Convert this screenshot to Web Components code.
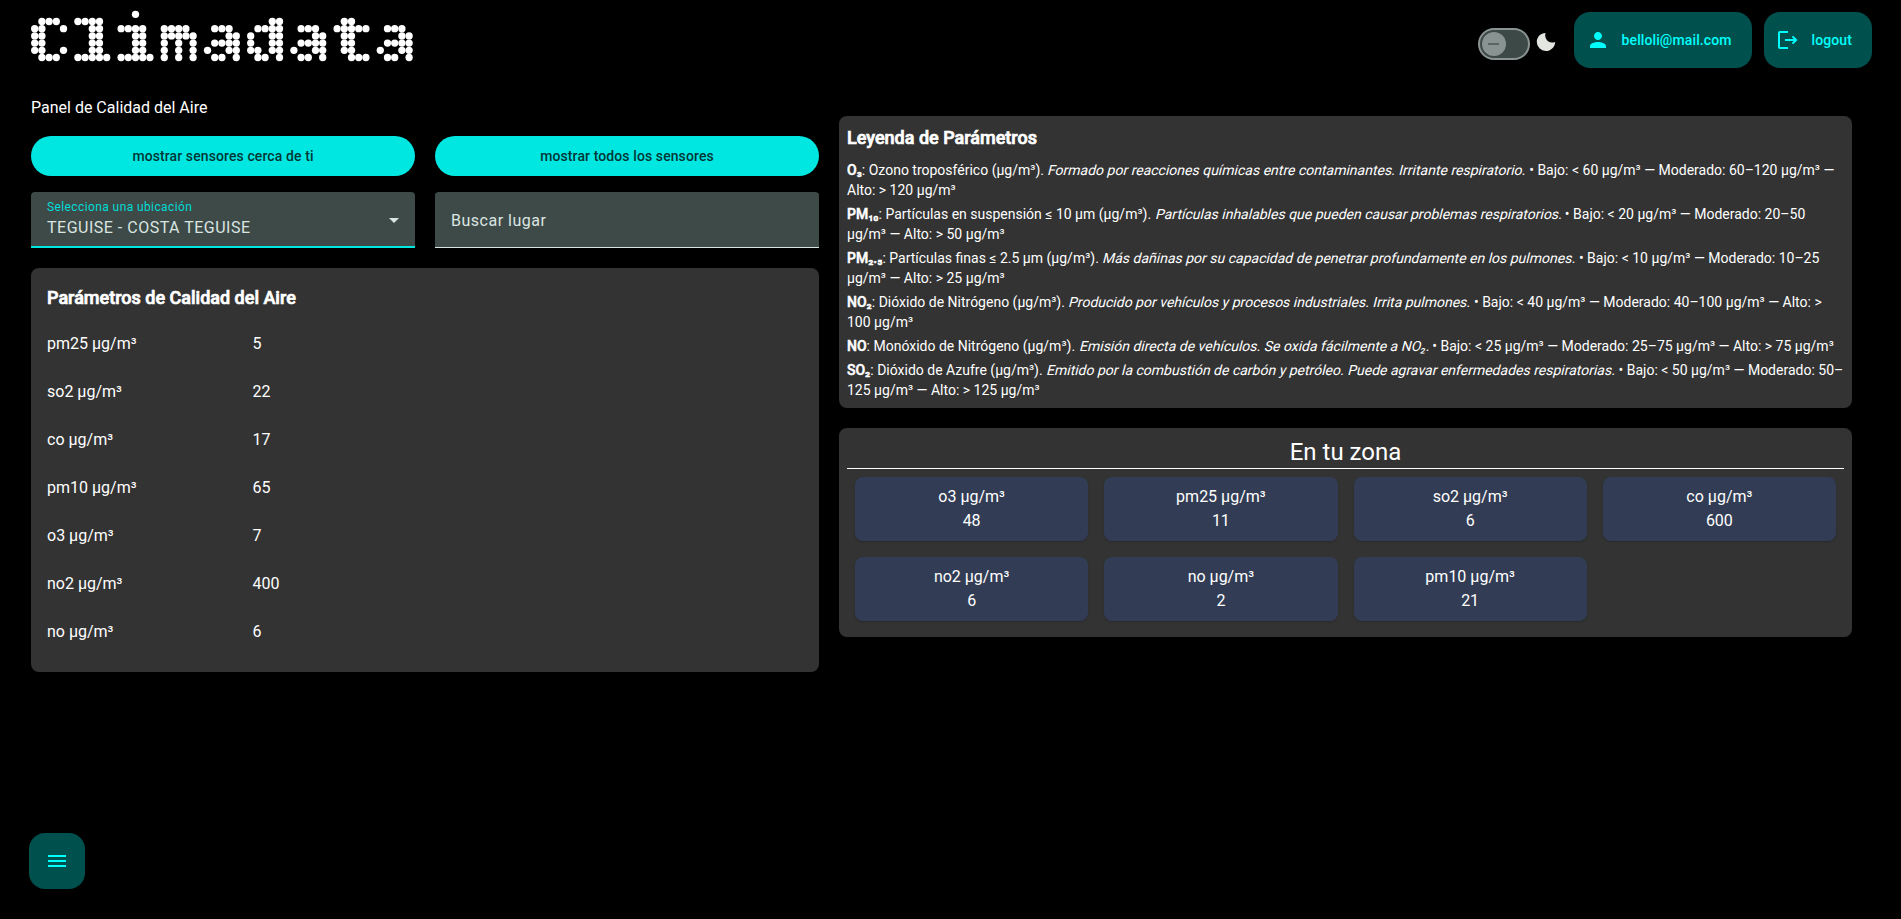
<!DOCTYPE html>
<html lang="es">
<head>
<meta charset="utf-8">
<title>Climadata</title>
<style>
html,body{margin:0;background:#000;height:100%;overflow:hidden}
body{font-family:Roboto,"Liberation Sans",sans-serif;font-size:16px;line-height:24px;color:#fff}
</style>
</head>
<body>
<clima-app></clima-app>
<script>
const define = (name, html, setup) => customElements.define(name, class extends HTMLElement {
  constructor() {
    super();
    this.attachShadow({ mode: 'open' }).innerHTML = html;
  }
  connectedCallback() { if (setup) setup.call(this, this.shadowRoot); }
});

/* Dot-matrix wordmark: seven rows of five dots per character */
const MATRIX = {
  C: '..... .###. ##..# ##... ##... ##..# .###.',
  l: '..... ####. ..##. ..##. ..##. ..##. #####',
  i: '..#.. ..... ####. ..##. ..##. ..##. #####',
  m: '..... ..... ####. ##### #.#.# #.#.# #.#.#',
  a: '..... ..... .###. ...## .#### #..## .##.#',
  d: '..... ...## .#### #..## #..## ##.## .##.#',
  t: '..... .##.. ##### .##.. .##.. .##.. ..###'
};
define('dot-logo', `<style>:host{display:block;width:384px;height:52px}svg{display:block}</style>
<svg width="390" height="52" viewBox="0 0 390 52" fill="#fff" role="img"></svg>`, function (root) {
  const word = this.getAttribute('word');
  const svg = root.querySelector('svg');
  svg.setAttribute('aria-label', word);
  let dots = '';
  [...word].forEach((ch, n) => MATRIX[ch].split(' ').forEach((row, r) => [...row].forEach((on, c) => {
    if (on === '#') dots += `<circle cx="${(3.7 + (n * 6 + c) * 7.2).toFixed(2)}" cy="${(4.3 + r * 7.2).toFixed(2)}" r="3.65"/>`;
  })));
  svg.innerHTML = dots;
});

define('theme-toggle', `<style>
:host{display:flex;align-items:center;gap:6px}
.track{box-sizing:border-box;width:52px;height:32px;border:2px solid #899391;border-radius:16px;background:#3d4947;padding:2px}
.knob{width:24px;height:24px;border-radius:50%;background:#899391;display:grid;place-items:center}
.knob i{width:11px;height:2px;background:#5b6664}
svg{display:block;margin-top:-4px}
</style><div class="track"><div class="knob"><i></i></div></div>
<svg width="20" height="20" viewBox="0 0 20 20" fill="#e3e5e1"><path d="M9.6 1.1C7.9 5.5 11.6 12.6 19.2 9.9C18.9 15.2 14.7 19 9.8 19A9 9 0 0 1 .8 10C.8 5.100 4.700 1.100 9.600 1.100Z"/></svg>`);

const ICONS = {
  person: 'M12 12c2.210 0 4-1.790 4-4s-1.790-4-4-4-4 1.790-4 4 1.790 4 4 4zm0 2c-2.670 0-8 1.340-8 4v2h16v-2c0-2.660-5.330-4-8-4z',
  logout: 'M4 5h8V3H4c-1.100 0-2 .9-2 2v14c0 1.100.9 2 2 2h8v-2H4V5zm17.500 7-4.300-4.300-1.400 1.400L17.700 11H9v2h8.700l-1.900 1.900 1.400 1.400z',
  menu: 'M3 18h18v-2H3v2zm0-5h18v-2H3v2zm0-7v2h18V6H3z'
};
define('fab-button', `<style>
:host{box-sizing:border-box;display:flex;align-items:center;gap:12px;height:56px;padding:0 20px 0 12px;border-radius:16px;background:#00504e;color:#00fffa;font-size:14px;font-weight:500;line-height:20px;white-space:nowrap;letter-spacing:.1px}
:host([square]){width:56px;padding:0 16px;gap:0}
svg{display:block;flex:none}
</style><svg width="24" height="24" viewBox="0 0 24 24" fill="currentColor"><path/></svg><slot></slot>`, function (root) {
  root.querySelector('path').setAttribute('d', ICONS[this.getAttribute('icon')]);
});

define('pill-button', `<style>
:host{display:flex;align-items:center;justify-content:center;height:40px;border-radius:20px;background:#00e7e2;color:#003736;font-size:14px;font-weight:500;letter-spacing:.1px}
</style><slot></slot>`);

define('filled-field', `<style>
:host{box-sizing:border-box;display:flex;align-items:center;height:56px;padding:2px 9px 0 16px;border-radius:4px 4px 0 0;background:#3e4a47;color:#dae5e2;letter-spacing:.5px;box-shadow:inset 0 -1px #dae5e2}
:host([active]){padding-top:0;box-shadow:inset 0 -2px #00e7e2}
.body{flex:1}
.label{display:block;font-size:12px;line-height:16px;letter-spacing:.4px;color:#00dcd7;margin:-1px 0 1px}
svg{display:none}
:host([active]) svg{display:block}
</style><div class="body"><span class="label"></span><slot></slot></div>
<svg width="24" height="24" viewBox="0 0 24 24" fill="#dae5e2"><path d="M7 10l5 5 5-5z"/></svg>`, function (root) {
  const label = root.querySelector('.label');
  if (this.hasAttribute('label')) label.textContent = this.getAttribute('label'); else label.remove();
});

define('dark-card', `<style>
:host{box-sizing:border-box;display:block;border-radius:8px;background:#333;padding:var(--pad,8px)}
</style><slot></slot>`);

define('card-title', `<style>
:host{display:block;font-size:18px;line-height:28px;font-weight:500;-webkit-text-stroke:.7px currentColor;margin-bottom:8px}
</style><slot></slot>`);

define('param-row', `<style>
:host{display:grid;grid-template-columns:205.5px 1fr;align-items:center;height:48px}
</style><slot></slot><slot name="value"></slot>`);

define('legend-item', `<style>
:host{display:block;font-size:14px;line-height:20px}
:host(:not(:last-of-type)){margin-bottom:4px}
</style><slot></slot>`);

define('zone-tile', `<style>
:host{display:flex;flex-direction:column;align-items:center;padding:8px;border-radius:8px;background:#323d55;box-shadow:0 1px 2px rgba(0,0,0,.2)}
</style><slot></slot><slot name="value"></slot>`);

define('clima-app', `<style>
:host{display:block;height:919px}
legend-item b{font-weight:500;-webkit-text-stroke:.5px currentColor}
legend-item em{display:inline-block;font-style:normal;transform:skewX(-14deg);transform-origin:0 15px}
header{display:flex;align-items:flex-start;justify-content:space-between;padding:0 29px 0 31px;height:88px}
dot-logo{margin-top:10px}
.actions{display:flex;gap:12px;padding-top:12px}
theme-toggle{margin:12px 6px 0 0;height:40px}
main{display:grid;grid-template-columns:788px 1013px;gap:20px;padding:0 49px 0 31px;align-items:start}
.intro{margin:8px 0 16px}
.pair{display:grid;grid-template-columns:1fr 1fr;gap:16px 20px;margin-bottom:20px}
.readings{--pad:16px}
.right{display:grid;gap:20px;padding-top:28px}
h2{margin:0;font-size:24px;line-height:32px;font-weight:400;text-align:center;border-bottom:1px solid #fff}
.tiles{display:grid;grid-template-columns:repeat(4,1fr);gap:16px;padding:8px}
.menu{position:fixed;left:29px;bottom:30px}
</style>
<header>
  <dot-logo word="Climadata"></dot-logo>
  <div class="actions">
    <theme-toggle></theme-toggle>
    <fab-button icon="person">belloli@mail.com</fab-button>
    <fab-button icon="logout">logout</fab-button>
  </div>
</header>
<main>
  <section class="left">
    <div class="intro">Panel de Calidad del Aire</div>
    <div class="pair">
      <pill-button>mostrar sensores cerca de ti</pill-button>
      <pill-button>mostrar todos los sensores</pill-button>
      <filled-field active label="Selecciona una ubicación">TEGUISE - COSTA TEGUISE</filled-field>
      <filled-field>Buscar lugar</filled-field>
    </div>
    <dark-card class="readings">
      <card-title>Parámetros de Calidad del Aire</card-title>
      <param-row><span>pm25 µg/m³</span><span slot="value">5</span></param-row>
      <param-row><span>so2 µg/m³</span><span slot="value">22</span></param-row>
      <param-row><span>co µg/m³</span><span slot="value">17</span></param-row>
      <param-row><span>pm10 µg/m³</span><span slot="value">65</span></param-row>
      <param-row><span>o3 µg/m³</span><span slot="value">7</span></param-row>
      <param-row><span>no2 µg/m³</span><span slot="value">400</span></param-row>
      <param-row><span>no µg/m³</span><span slot="value">6</span></param-row>
    </dark-card>
  </section>
  <section class="right">
    <dark-card>
      <card-title>Leyenda de Parámetros</card-title>
      <legend-item><b>O₃</b>: Ozono troposférico (µg/m³). <em>Formado por reacciones químicas entre contaminantes. Irritante respiratorio.</em> • Bajo: &lt; 60 µg/m³ — Moderado: 60–120 µg/m³ — Alto: &gt; 120 µg/m³</legend-item>
      <legend-item><b>PM₁₀</b>: Partículas en suspensión ≤ 10 µm (µg/m³). <em>Partículas inhalables que pueden causar problemas respiratorios.</em> • Bajo: &lt; 20 µg/m³ — Moderado: 20–50 µg/m³ — Alto: &gt; 50 µg/m³</legend-item>
      <legend-item><b>PM₂.₅</b>: Partículas finas ≤ 2.5 µm (µg/m³). <em>Más dañinas por su capacidad de penetrar profundamente en los pulmones.</em> • Bajo: &lt; 10 µg/m³ — Moderado: 10–25 µg/m³ — Alto: &gt; 25 µg/m³</legend-item>
      <legend-item><b>NO₂</b>: Dióxido de Nitrógeno (µg/m³). <em>Producido por vehículos y procesos industriales. Irrita pulmones.</em> • Bajo: &lt; 40 µg/m³ — Moderado: 40–100 µg/m³ — Alto: &gt; 100 µg/m³</legend-item>
      <legend-item><b>NO</b>: Monóxido de Nitrógeno (µg/m³). <em>Emisión directa de vehículos. Se oxida fácilmente a NO₂.</em> • Bajo: &lt; 25 µg/m³ — Moderado: 25–75 µg/m³ — Alto: &gt; 75 µg/m³</legend-item>
      <legend-item><b>SO₂</b>: Dióxido de Azufre (µg/m³). <em>Emitido por la combustión de carbón y petróleo. Puede agravar enfermedades respiratorias.</em> • Bajo: &lt; 50 µg/m³ — Moderado: 50–125 µg/m³ — Alto: &gt; 125 µg/m³</legend-item>
    </dark-card>
    <dark-card>
      <h2>En tu zona</h2>
      <div class="tiles">
        <zone-tile>o3 µg/m³<span slot="value">48</span></zone-tile>
        <zone-tile>pm25 µg/m³<span slot="value">11</span></zone-tile>
        <zone-tile>so2 µg/m³<span slot="value">6</span></zone-tile>
        <zone-tile>co µg/m³<span slot="value">600</span></zone-tile>
        <zone-tile>no2 µg/m³<span slot="value">6</span></zone-tile>
        <zone-tile>no µg/m³<span slot="value">2</span></zone-tile>
        <zone-tile>pm10 µg/m³<span slot="value">21</span></zone-tile>
      </div>
    </dark-card>
  </section>
</main>
<fab-button class="menu" square icon="menu"></fab-button>`);
</script>
</body>
</html>
